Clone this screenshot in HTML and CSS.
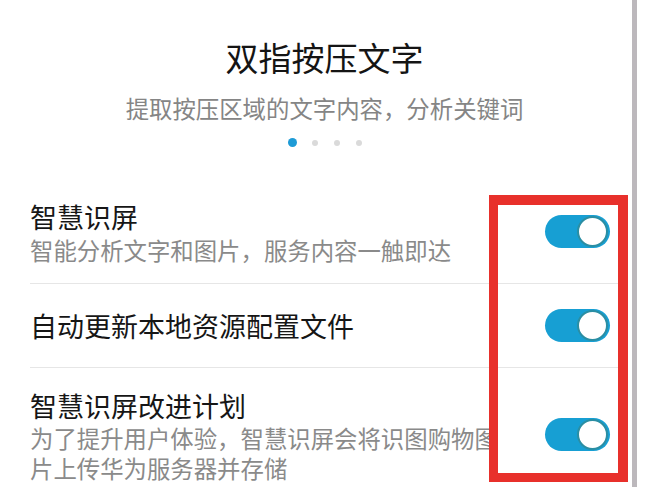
FILE: index.html
```html
<!DOCTYPE html>
<html lang="zh-CN">
<head>
<meta charset="utf-8">
<title>双指按压文字</title>
<link rel="stylesheet" href="styles.css">
</head>
<body>
<div class="screen">
  <header class="intro">
    <h1 class="intro-title">双指按压文字</h1>
    <p class="intro-sub">提取按压区域的文字内容，分析关键词</p>
    <div class="dots">
      <span class="dot dot-active"></span>
      <span class="dot"></span>
      <span class="dot"></span>
      <span class="dot"></span>
    </div>
  </header>

  <div class="list">
    <div class="row row-first">
      <div class="row-text">
        <div class="row-title">智慧识屏</div>
        <div class="row-desc">智能分析文字和图片，服务内容一触即达</div>
      </div>
      <div class="toggle"><span class="knob"></span></div>
    </div>
    <div class="row row-single">
      <div class="row-text">
        <div class="row-title">自动更新本地资源配置文件</div>
      </div>
      <div class="toggle"><span class="knob"></span></div>
    </div>
    <div class="row row-last">
      <div class="row-text">
        <div class="row-title">智慧识屏改进计划</div>
        <div class="row-desc row-desc-wrap">为了提升用户体验，智慧识屏会将识图购物图片上传华为服务器并存储</div>
      </div>
      <div class="toggle"><span class="knob"></span></div>
    </div>
  </div>

  <div class="scrollbar"></div>
  <div class="highlight"></div>
</div>
</body>
</html>
```

FILE: styles.css
```css
html, body {
  margin: 0;
  padding: 0;
  background: #ffffff;
}

body {
  width: 649px;
  height: 487px;
  overflow: hidden;
  font-family: "Noto Sans CJK SC", "Noto Sans", sans-serif;
}

.screen {
  position: relative;
  width: 649px;
  height: 487px;
  overflow: hidden;
  background: #ffffff;
}

.intro {
  display: flex;
  flex-direction: column;
  align-items: center;
  padding-top: 35px;
  height: 150px;
}

.intro-title {
  margin: 0;
  font-size: 33px;
  line-height: 44px;
  font-weight: 400;
  color: #141414;
}

.intro-sub {
  margin: 14px 0 0;
  font-size: 23.4px;
  line-height: 30px;
  color: #858585;
}

.dots {
  display: flex;
  align-items: center;
  margin-top: 15px;
  height: 9px;
  padding-left: 1px;
}

.dot {
  width: 6px;
  height: 6px;
  border-radius: 50%;
  background: #dadada;
  margin-left: 16px;
}

.dot-active {
  width: 9px;
  height: 9px;
  background: #1e9bd6;
  margin-left: 0;
  margin-right: -1.5px;
}

.list {
  margin: 0 29px 0 30px;
}

.row {
  display: flex;
  align-items: center;
  padding-right: 10px;
}

.row + .row {
  border-top: 1px solid #e6e6e6;
}

.row-first {
  padding-top: 16px;
  padding-bottom: 16px;
}

.row-single {
  padding-top: 25px;
  padding-bottom: 25px;
}

.row-last {
  padding-top: 22px;
  padding-bottom: 10px;
}

.row-text {
  flex: 1;
  min-width: 0;
  margin-right: 35px;
}

.row-title {
  font-size: 27px;
  line-height: 32px;
  color: #161616;
}

.row-desc {
  font-size: 23.4px;
  line-height: 34px;
  color: #8a8a8a;
}

.row-desc-wrap {
  line-height: 30px;
  margin-top: 1px;
}

.row-first .toggle {
  margin-top: -6px;
}

.row-last .toggle {
  margin-top: -4px;
}

.toggle {
  position: relative;
  flex: none;
  width: 65px;
  height: 33px;
  border-radius: 17px;
  background: #179fd3;
  display: flex;
  align-items: center;
  justify-content: flex-end;
  padding-right: 2px;
  box-sizing: border-box;
}

.knob {
  width: 27px;
  height: 27px;
  border-radius: 50%;
  background: #ffffff;
  border: 2px solid #2b8ea3;
}

.scrollbar {
  position: absolute;
  left: 632px;
  top: 0;
  width: 5px;
  height: 100%;
  background: #bcb8bc;
}

.highlight {
  position: absolute;
  left: 489px;
  top: 195px;
  width: 120px;
  height: 268px;
  border: 9px solid #e8302b;
  border-top-width: 10px;
  border-right-width: 10px;
}
```
